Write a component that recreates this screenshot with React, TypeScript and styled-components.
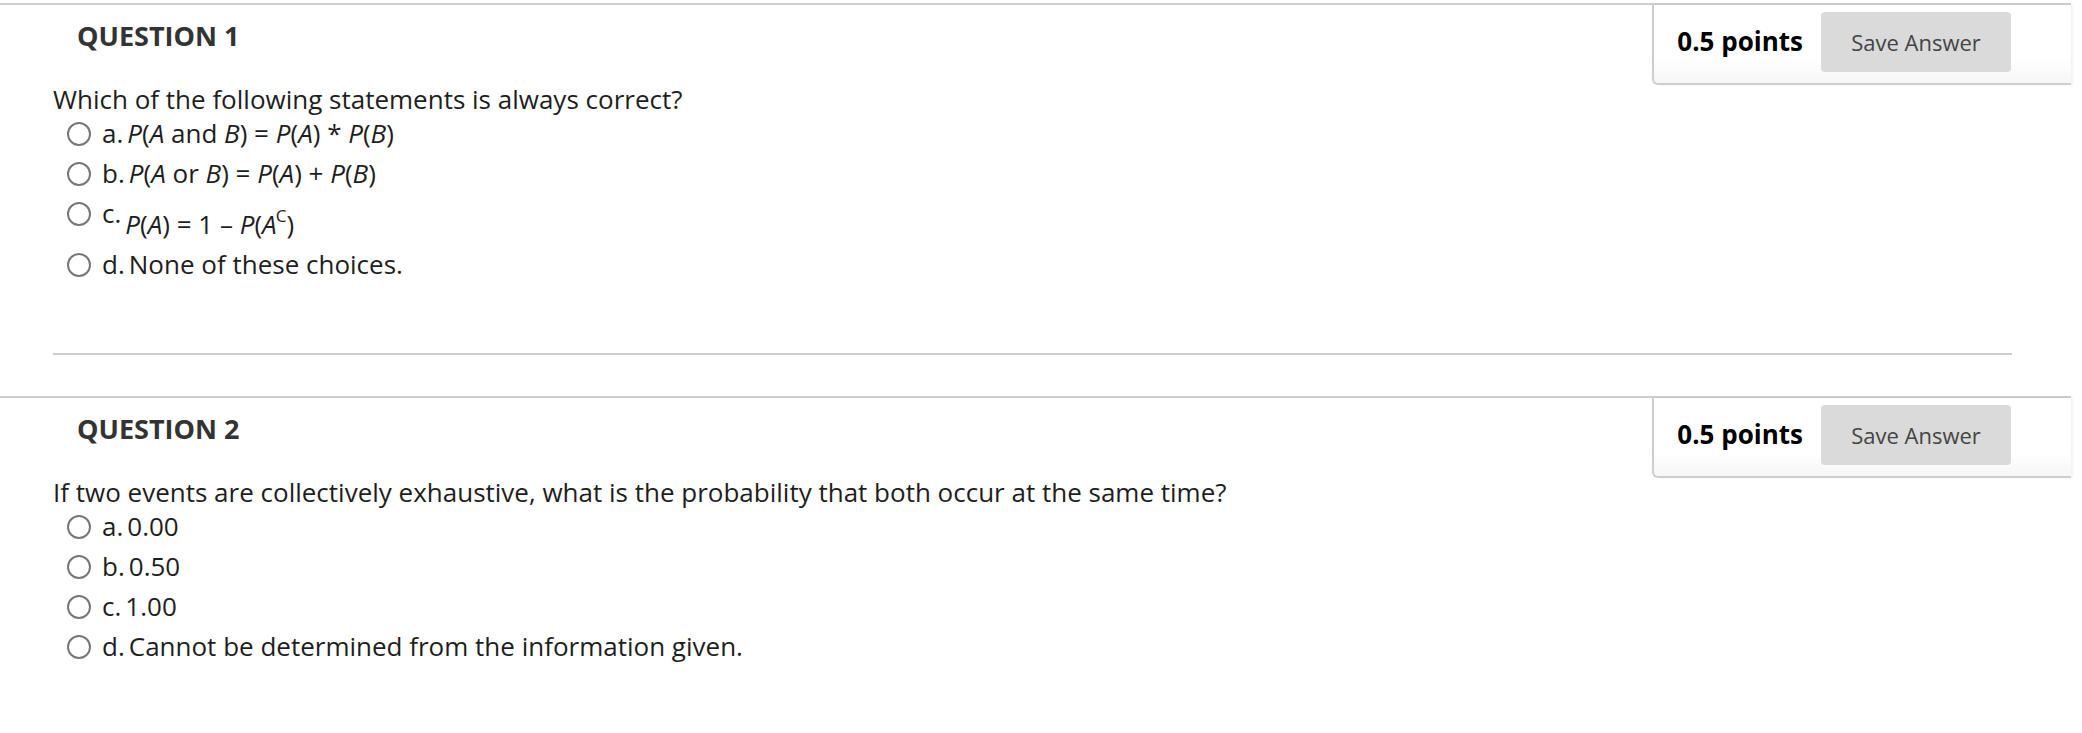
import React from 'react';
import styled, { createGlobalStyle } from 'styled-components';

const GlobalStyle = createGlobalStyle`
  body {
    margin: 0;
    background: #fff;
    font-family: 'Open Sans', 'Noto Sans', sans-serif;
    color: #222;
  }
`;

const Page = styled.div`
  width: 2071px;
  padding-top: 3px;
`;

const Block = styled.section`
  border-top: 2px solid #cdcdcd;
`;

const Header = styled.div`
  display: flex;
  justify-content: space-between;
  align-items: flex-start;
`;

const Title = styled.h3`
  margin: 0;
  padding: 17px 0 0 77px;
  font-size: 27px;
  line-height: 27px;
  font-weight: 700;
  color: #333;
`;

const PointsBox = styled.div`
  display: flex;
  align-items: center;
  gap: 18px;
  padding: 7px 60px 11px 23px;
  border-left: 2px solid #cdcdcd;
  border-bottom: 2px solid #cdcdcd;
  border-bottom-left-radius: 6px;
  background: linear-gradient(to bottom, #fff 70%, #f6f6f6 100%);
  box-shadow: 2px 0 3px rgba(0, 0, 0, 0.06);
`;

const Points = styled.span`
  font-size: 26px;
  font-weight: 700;
  color: #000;
  margin-top: -3px;
`;

const SaveButton = styled.button`
  width: 190px;
  height: 60px;
  border: none;
  border-radius: 4px;
  background: #dadada;
  color: #444;
  font-family: 'Open Sans', sans-serif;
  font-size: 22px;
  padding: 0;
`;

const Body = styled.div`
  padding-left: 53px;
`;

const QuestionText = styled.p`
  margin: 0;
  font-size: 26px;
  line-height: 28px;
  color: #1e1e1e;
`;

const Options = styled.ul`
  list-style: none;
  margin: 0;
  padding: 0;
`;

const Option = styled.li`
  display: flex;
  align-items: flex-start;
  font-size: 26px;
  line-height: 40px;
  color: #1e1e1e;
`;

const Radio = styled.span`
  flex: none;
  width: 24px;
  height: 24px;
  box-sizing: border-box;
  margin: 9px 11px 0 14px;
  border: 2px solid #777;
  border-radius: 50%;
  background: #fff;
`;

const Letter = styled.span`
  margin-right: 4px;
`;

const Answer = styled.span<{ $drop?: boolean }>`
  padding-top: ${({ $drop }) => ($drop ? '11px' : '0')};
`;

const Sup = styled.sup`
  font-size: 17px;
  line-height: 0;
  vertical-align: 12px;
  margin-left: -1px;
`;

const Separator = styled.hr`
  margin: 69px 0 41px 0;
  width: 1959px;
  border: none;
  border-top: 2px solid #cdcdcd;
`;

interface Choice {
  letter: string;
  content: React.ReactNode;
  drop?: boolean;
}

interface QuestionProps {
  number: number;
  text: string;
  choices: Choice[];
}

const Question: React.FC<QuestionProps> = ({ number, text, choices }) => (
  <Block>
    <Header>
      <Title>QUESTION {number}</Title>
      <PointsBox>
        <Points>0.5 points</Points>
        <SaveButton>Save Answer</SaveButton>
      </PointsBox>
    </Header>
    <Body>
      <QuestionText>{text}</QuestionText>
      <Options>
        {choices.map((c) => (
          <Option key={c.letter}>
            <Radio />
            <Letter>{c.letter}.</Letter>
            <Answer $drop={c.drop}>{c.content}</Answer>
          </Option>
        ))}
      </Options>
      <Separator />
    </Body>
  </Block>
);

const first: Choice[] = [
  {
    letter: 'a',
    content: (
      <>
        <i>P</i>(<i>A</i> and <i>B</i>) = <i>P</i>(<i>A</i>) * <i>P</i>(<i>B</i>)
      </>
    ),
  },
  {
    letter: 'b',
    content: (
      <>
        <i>P</i>(<i>A</i> or <i>B</i>) = <i>P</i>(<i>A</i>) + <i>P</i>(<i>B</i>)
      </>
    ),
  },
  {
    letter: 'c',
    drop: true,
    content: (
      <>
        <i>P</i>(<i>A</i>) = 1 – <i>P</i>(<i>A</i>
        <Sup>C</Sup>)
      </>
    ),
  },
  { letter: 'd', content: 'None of these choices.' },
];

const second: Choice[] = [
  { letter: 'a', content: '0.00' },
  { letter: 'b', content: '0.50' },
  { letter: 'c', content: '1.00' },
  { letter: 'd', content: 'Cannot be determined from the information given.' },
];

const App: React.FC = () => (
  <>
    <GlobalStyle />
    <Page>
      <Question number={1} text="Which of the following statements is always correct?" choices={first} />
      <Question
        number={2}
        text="If two events are collectively exhaustive, what is the probability that both occur at the same time?"
        choices={second}
      />
    </Page>
  </>
);

export default App;
